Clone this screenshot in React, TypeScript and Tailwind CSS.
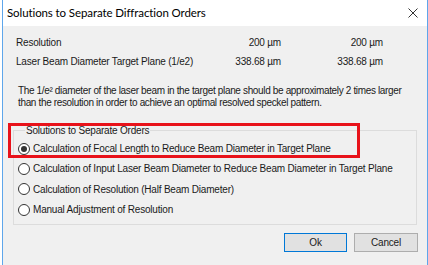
import React from 'react';

const options = [
  'Calculation of Focal Length to Reduce Beam Diameter in Target Plane',
  'Calculation of Input Laser Beam Diameter to Reduce Beam Diameter in Target Plane',
  'Calculation of Resolution (Half Beam Diameter)',
  'Manual Adjustment of Resolution',
];

const Radio = ({ checked }: { checked: boolean }) => (
  <span className="w-[12px] h-[12px] rounded-full border border-[#333333] bg-white flex items-center justify-center shrink-0">
    {checked && <span className="w-[6px] h-[6px] rounded-full bg-[#333333]" />}
  </span>
);

const App = () => {
  return (
    <div className="w-[428px] h-[265px] bg-white overflow-hidden pl-[2px]">
      <div className="h-full flex flex-col border-x border-[#5ea6eb]">
        {/* Title bar */}
        <div className="h-[26px] bg-white flex items-center justify-between pl-[4px] pr-[9px] shrink-0">
          <span className="text-[11.5px] tracking-[-0.1px] text-black" style={{ fontFamily: 'Lato, sans-serif' }}>
            Solutions to Separate Diffraction Orders
          </span>
          <svg width="10" height="10" viewBox="0 0 10 10">
            <path d="M0.5 0.5 L9.5 9.5 M9.5 0.5 L0.5 9.5" stroke="#333" strokeWidth="1" fill="none" />
          </svg>
        </div>

        {/* Body */}
        <div
          className="relative flex-1 bg-[#f0f0f0] pt-[10px] text-[10px] tracking-[-0.2px] leading-[13px] text-[#1a1a1a]"
          style={{ fontFamily: '"Liberation Sans", Arial, sans-serif' }}
        >
          <div className="ml-[13px] flex flex-col gap-[6px]">
            <div className="grid grid-cols-[197px_68px_102px] whitespace-nowrap">
              <span>Resolution</span>
              <span className="text-right">200 µm</span>
              <span className="text-right">200 µm</span>
            </div>
            <div className="grid grid-cols-[197px_68px_102px] whitespace-nowrap">
              <span>Laser Beam Diameter Target Plane (1/e2)</span>
              <span className="text-right">338.68 µm</span>
              <span className="text-right">338.68 µm</span>
            </div>
          </div>

          <p className="ml-[15px] mt-[17px] leading-[11.5px] tracking-[-0.35px] whitespace-nowrap">
            The 1/e² diameter of the laser beam in the target plane should be approximately 2 times larger
            <br />
            than the resolution in order to achieve an optimal resolved speckel pattern.
          </p>

          <fieldset className="ml-[10px] mt-[16px] w-[404px] h-[101px] border border-[#dcdcdc] pl-[4px] pt-[5px]">
            <legend className="ml-[7px] px-[1px] font-normal">Solutions to Separate Orders</legend>
            <div className="flex flex-col gap-[7.4px]">
              {options.map((o, i) => (
                <label key={o} className="flex items-center gap-[3px] whitespace-nowrap">
                  <Radio checked={i === 0} />
                  <span>{o}</span>
                </label>
              ))}
            </div>
          </fieldset>

          <div className="flex justify-end gap-[7px] mt-[8px] pr-[9px]">
            <button className="w-[63px] h-[19px] bg-[#e1e1e1] border border-[#0078d7] text-[10px]">Ok</button>
            <button className="w-[64px] h-[19px] bg-[#e1e1e1] border border-[#adadad] text-[10px]">Cancel</button>
          </div>

          {/* highlight annotation */}
          <div className="absolute left-[5px] top-[97px] w-[352px] h-[35px] border-[3px] border-[#e8121a]" />
        </div>
      </div>
    </div>
  );
};

export default App;
